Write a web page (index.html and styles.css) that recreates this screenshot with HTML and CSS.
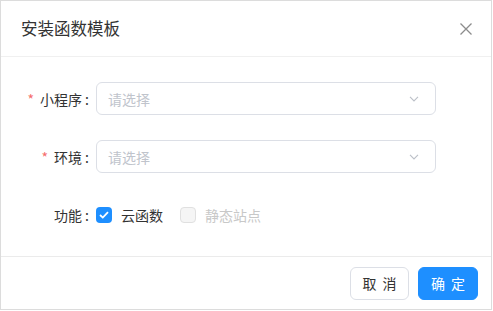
FILE: index.html
```html
<!DOCTYPE html>
<html lang="zh">
<head>
<meta charset="utf-8">
<link rel="stylesheet" href="styles.css">
</head>
<body>
<div class="dialog">
  <div class="header">
    <span class="title">安装函数模板</span>
    <svg class="close" width="14" height="14" viewBox="0 0 14 14"><path d="M1.5 1.5L12.5 12.5M12.5 1.5L1.5 12.5" stroke="#8c8c8c" stroke-width="1.3" fill="none"/></svg>
  </div>
  <div class="body">
    <div class="row">
      <label class="label"><span class="star">*</span>小程序<span class="colon">:</span></label>
      <div class="select"><span class="ph">请选择</span><svg width="10" height="6" viewBox="0 0 10 6"><path d="M1 0.8L5 5L9 0.8" stroke="#bcc0c8" stroke-width="1.1" fill="none"/></svg></div>
    </div>
    <div class="row">
      <label class="label"><span class="star">*</span>环境<span class="colon">:</span></label>
      <div class="select"><span class="ph">请选择</span><svg width="10" height="6" viewBox="0 0 10 6"><path d="M1 0.8L5 5L9 0.8" stroke="#bcc0c8" stroke-width="1.1" fill="none"/></svg></div>
    </div>
    <div class="row">
      <label class="label">功能<span class="colon">:</span></label>
      <div class="checks">
        <span class="cb checked"><svg width="10" height="8" viewBox="0 0 10 8"><path d="M1 4L3.8 6.6L9 1.2" stroke="#fff" stroke-width="1.8" fill="none"/></svg></span>
        <span class="cbtext">云函数</span>
        <span class="cb disabled"></span>
        <span class="cbtext dis">静态站点</span>
      </div>
    </div>
  </div>
  <div class="footer">
    <button class="btn">取消</button>
    <button class="btn primary">确定</button>
  </div>
</div>
</body>
</html>
```
FILE: styles.css
```css
* { box-sizing: border-box; }
html, body { margin: 0; padding: 0; background: #fff; }
body { font-family: "Noto Sans CJK SC", "Noto Sans", sans-serif; color: #333; }
.dialog {
  width: 492px;
  height: 310px;
  border: 1px solid #dcdcdc;
  background: #fff;
  display: flex;
  flex-direction: column;
}
.header {
  height: 56px;
  border-bottom: 1px solid #f0f0f0;
  display: flex;
  align-items: center;
  justify-content: space-between;
  padding: 0 18px 0 20px;
}
.title { font-size: 16.5px; color: #333; line-height: 1; }
.close { display: block; }
.body {
  height: 200px;
  padding: 25px 55px 0 0;
  border-bottom: 1px solid #ebebeb;
}
.row {
  display: flex;
  align-items: center;
  height: 33px;
  margin-bottom: 25px;
}
.label {
  width: 88px;
  margin-right: 7px;
  text-align: right;
  font-size: 14px;
  color: #333;
  white-space: nowrap;
}
.colon { margin-left: 3px; }
.star { color: #f56c6c; margin-right: 6px; }
.select {
  flex: 1;
  height: 33px;
  border: 1px solid #dcdfe6;
  border-radius: 6px;
  display: flex;
  align-items: center;
  justify-content: space-between;
  padding: 0 16px 0 11px;
}
.select svg { display: block; }
.ph { font-size: 14px; color: #c0c4cc; }
.checks { display: flex; align-items: center; }
.cb {
  width: 16px;
  height: 16px;
  border-radius: 4px;
  display: flex;
  align-items: center;
  justify-content: center;
}
.cb.checked { background: #1e8fff; }
.cb.disabled { background: #f5f5f5; border: 1px solid #e0e0e0; margin-left: 17px; }
.cbtext { font-size: 14px; color: #333; margin-left: 9px; }
.cbtext.dis { color: #c8c8c8; margin-left: 9px; }
.footer {
  flex: 1;
  display: flex;
  justify-content: flex-end;
  align-items: center;
  padding: 0 13px 0 0;
  gap: 9px;
}
.btn {
  height: 33px;
  padding: 0 0 0 6px;
  font-family: inherit;
  font-size: 14px;
  letter-spacing: 6px;
  white-space: nowrap;
  border: 1px solid #dcdfe6;
  border-radius: 6px;
  background: #fff;
  color: #333;
  line-height: 1;
  width: 59px;
}
.btn.primary {
  background: #1e8fff;
  border-color: #1e8fff;
  color: #fff;
  width: 60px;
}
```
